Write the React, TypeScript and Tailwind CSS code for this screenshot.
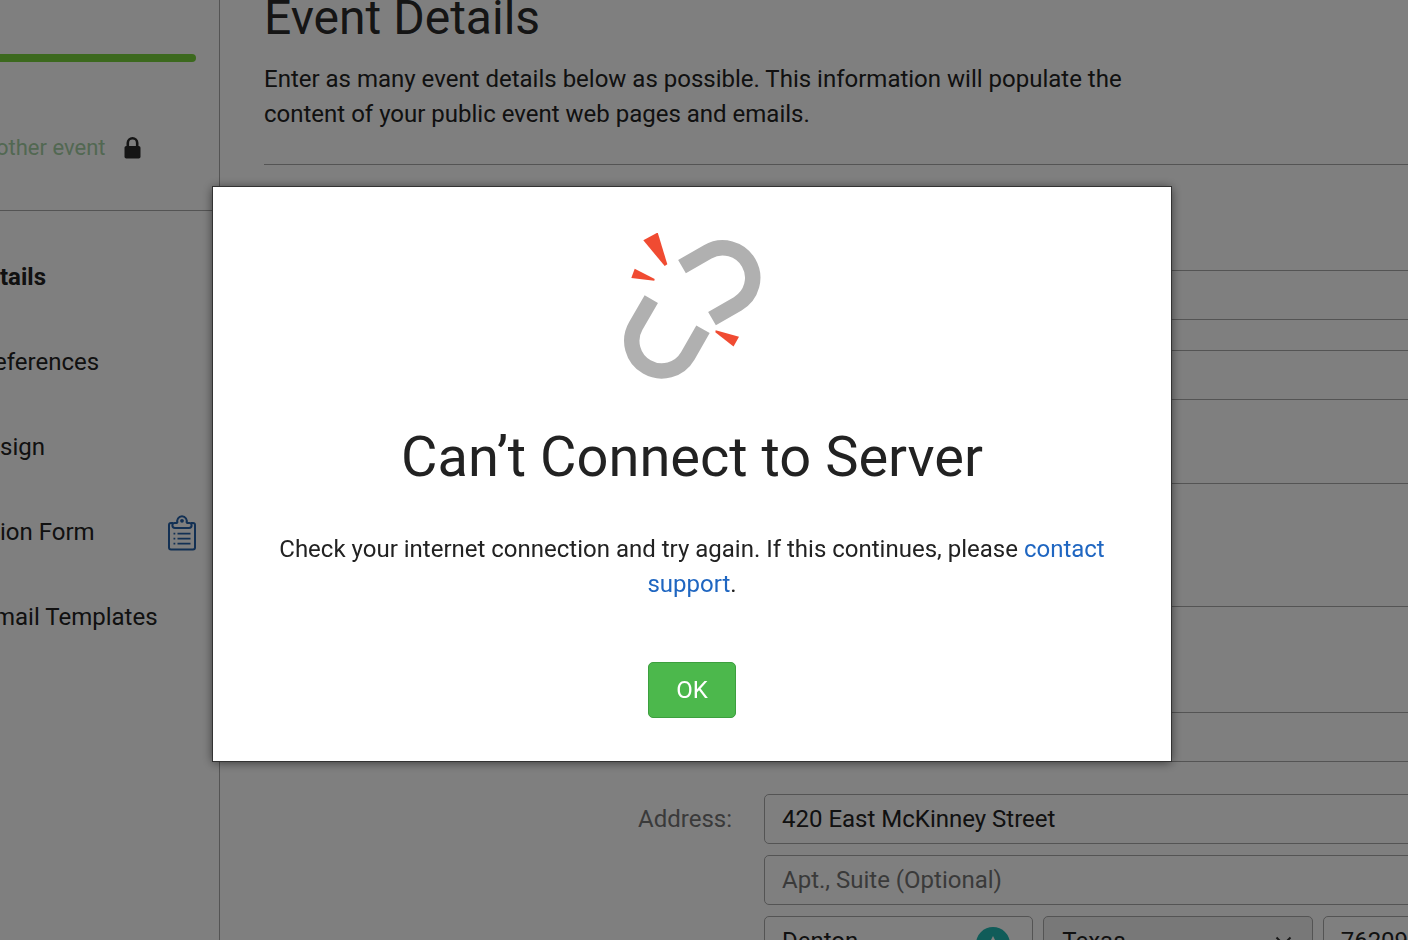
import { useState } from 'react';

interface NavItem {
  label: string;
  active?: boolean;
  tucked?: boolean;
  hasForm?: boolean;
}

const NAV_ITEMS: NavItem[] = [
  { label: 'tails', active: true },
  { label: 'eferences', tucked: true },
  { label: 'sign' },
  { label: 'ion Form', hasForm: true },
  { label: 'mail Templates', tucked: true },
];

const FIELD = 'h-[50px] w-full rounded-[5px] border border-[#a8a8a8] bg-white px-[17px] text-2xl text-[#222] placeholder:text-[#757575]';

function LockIcon() {
  return (
    <svg className="h-[22px] w-[17px]" viewBox="0 0 17 22" aria-hidden>
      <path d="M3.8 10V6a4.7 4.7 0 0 1 9.4 0v4" fill="none" stroke="#2a2a2a" strokeWidth="2.6" />
      <rect x="0.5" y="9" width="16" height="12.5" rx="1.8" fill="#2a2a2a" />
    </svg>
  );
}

function ClipboardIcon() {
  return (
    <svg className="h-[36px] w-[28px]" viewBox="0 0 28 36" fill="none" stroke="#2460a8" strokeWidth="2" aria-hidden>
      <path d="M5 8H3a2 2 0 0 0-2 2v22.5a2 2 0 0 0 2 2h22a2 2 0 0 0 2-2V10a2 2 0 0 0-2-2h-2" />
      <path d="M9.600 8H6.500Q4.400 8 4.400 10.200Q4.400 13 7 13h14q2.600 0 2.600-2.800Q23.600 8 21.500 8h-3.100" />
      <path d="M9.600 8a4.800 4.800 0 1 1 8.800 0" />
      <circle cx="14" cy="5.800" r="1.900" fill="#2460a8" stroke="none" />
      <path d="M9.500 18.600h13M9.500 23.600h13M9.500 28.600h13M5.500 18.600h1.800M5.500 23.600h1.800M5.500 28.600h1.800" strokeWidth="1.700" />
    </svg>
  );
}

function BrokenLinkIcon() {
  return (
    <svg className="h-[146px] w-[137px]" viewBox="0 0 137 146" fill="none" aria-hidden>
      <g stroke="#b0b0b0" strokeWidth="15.4">
        <path d="M58 33.700L83.700 18.800A30 30 0 0 1 113.700 70.800L88 85.700" />
        <path d="M27.300 66.200L11.800 92.900A30 30 0 0 0 63.800 122.900L79 96.200" />
      </g>
      <g fill="#f04b32">
        <path d="M19.300 7.300L33.700 -0.500L43.300 31.300L40.700 33Z" />
        <path d="M10.700 35.700L30.700 46L30.300 47.700L7.300 45Z" />
        <path d="M91.700 97.300L115 103.700L109.500 113.500L91.300 99.300Z" />
      </g>
    </svg>
  );
}

function Sidebar() {
  return (
    <aside className="w-[220px] shrink-0 overflow-hidden border-r border-[#a8a8a8]">
      <div className="h-[211px] border-b border-[#a8a8a8] pt-[54px]">
        <div className="mr-[23px] h-2 rounded-r-full bg-[#78d23c]" />
        <div className="mt-[68px] -ml-1 flex items-center gap-[18px] text-[22px] leading-[35px]">
          <a href="#events" className="text-[#a4d0a4]">other event</a>
          <LockIcon />
        </div>
      </div>
      <nav className="mt-[49px] flex flex-col gap-[50px] pr-[23px]">
        {NAV_ITEMS.map((item) => (
          <a
            key={item.label}
            href="#section"
            className={`flex h-[35px] items-center justify-between text-2xl leading-[35px] whitespace-nowrap text-[#222] ${item.tucked ? '-ml-1.5' : ''} ${item.active ? 'font-bold' : ''}`}
          >
            {item.label}
            {item.hasForm && <ClipboardIcon />}
          </a>
        ))}
      </nav>
    </aside>
  );
}

function EventForm() {
  return (
    <main className="min-w-0 flex-1 pl-[44px]">
      <h1 className="text-5xl leading-[36px] text-[#2a2a2a]">Event Details</h1>
      <p className="mt-[26px] max-w-[900px] text-2xl leading-[35px] text-[#222]">
        Enter as many event details below as possible. This information will populate the content of your public event web
        pages and emails.
      </p>
      <hr className="mt-[32px] border-[#a8a8a8]" />

      <div className="mt-[105px] ml-[500px] flex w-[828px] flex-col gap-[30px]">
        <input className={FIELD} aria-label="Event name" />
        <input className={FIELD} aria-label="Event subtitle" />
      </div>
      <hr className="mt-[83px] border-[#a8a8a8]" />
      <hr className="mt-[122px] border-[#a8a8a8]" />

      <div className="mt-[105px] ml-[500px] w-[828px]">
        <input className={FIELD} aria-label="Venue name" />
      </div>

      <div className="mt-[32px] flex gap-[32px]">
        <label htmlFor="address" className="w-[468px] shrink-0 pt-[8px] text-right text-2xl leading-[35px] text-[#757575]">
          Address:
        </label>
        <div className="flex w-[828px] shrink-0 flex-col gap-[11px]">
          <input id="address" className={FIELD} defaultValue="420 East McKinney Street" />
          <input className={FIELD} placeholder="Apt., Suite (Optional)" aria-label="Apt., Suite" />
          <div className="grid grid-cols-3 gap-[10px]">
            <div className="relative">
              <input className={FIELD} defaultValue="Denton" aria-label="City" />
              <svg className="absolute top-[11px] right-[23px] h-[34px] w-[34px]" viewBox="0 0 34 34" aria-hidden>
                <circle cx="17" cy="17" r="17" fill="#20b8b2" />
                <path d="M17 9l3 6 6 2-6 2-3 6-3-6-6-2 6-2z" fill="#fff" />
              </svg>
            </div>
            <div className="relative">
              <select
                className="h-[50px] w-full appearance-none rounded-[5px] border border-[#a8a8a8] bg-[#f0f0f0] px-[18px] text-2xl text-[#222]"
                defaultValue="Texas"
                aria-label="State"
              >
                <option>Texas</option>
              </select>
              <svg className="pointer-events-none absolute top-[20px] right-[21px] h-[10px] w-[17px]" viewBox="0 0 17 10" fill="none" stroke="#333" strokeWidth="2" aria-hidden>
                <path d="M1.500 1.500l7 7 7-7" />
              </svg>
            </div>
            <input className={FIELD} defaultValue="76209" aria-label="ZIP code" />
          </div>
        </div>
      </div>
    </main>
  );
}

function ConnectionDialog({ onClose }: { onClose: () => void }) {
  return (
    <div className="fixed inset-0 flex items-center justify-center bg-black/50 pt-2 pr-6">
      <div
        role="alertdialog"
        aria-modal="true"
        aria-labelledby="dialog-title"
        className="flex w-full max-w-[958px] flex-col items-center bg-white px-[50px] pt-[46px] pb-[43px] text-center text-[#222] shadow-[0_0_0_1px_#333,0_1px_10px_rgba(0,0,0,0.6)]"
      >
        <BrokenLinkIcon />
        <h2 id="dialog-title" className="mt-[46px] text-[56px] leading-[64px]">Can’t Connect to Server</h2>
        <p className="mt-[43px] text-2xl leading-[35px]">
          Check your internet connection and try again. If this continues, please{' '}
          <a href="#support" className="text-[#1f66c1]">contact support</a>.
        </p>
        <button
          type="button"
          onClick={onClose}
          className="mt-[60px] h-[56px] w-[88px] rounded-[5px] border border-[#3c9f3e] bg-[#4cb84c] text-2xl text-white"
        >
          OK
        </button>
      </div>
    </div>
  );
}

export default function App() {
  const [disconnected, setDisconnected] = useState(true);

  return (
    <div className="flex h-screen overflow-hidden bg-white font-['Roboto',sans-serif]">
      <Sidebar />
      <EventForm />
      {disconnected && <ConnectionDialog onClose={() => setDisconnected(false)} />}
    </div>
  );
}
